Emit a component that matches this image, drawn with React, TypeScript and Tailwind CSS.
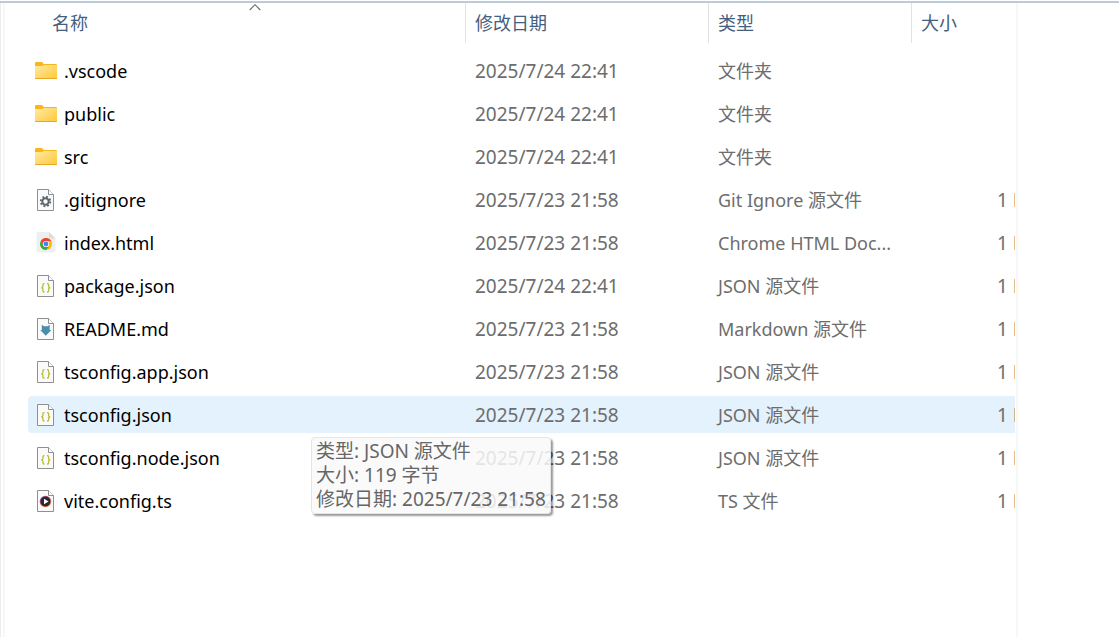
import React from "react";

type Kind = "folder" | "gear" | "chrome" | "json" | "markdown" | "media";

interface Entry {
  name: string;
  modified: string;
  type: string;
  kind: Kind;
  size?: string;
  hovered?: boolean;
}

const entries: Entry[] = [
  { name: ".vscode", modified: "2025/7/24 22:41", type: "文件夹", kind: "folder" },
  { name: "public", modified: "2025/7/24 22:41", type: "文件夹", kind: "folder" },
  { name: "src", modified: "2025/7/24 22:41", type: "文件夹", kind: "folder" },
  { name: ".gitignore", modified: "2025/7/23 21:58", type: "Git Ignore 源文件", kind: "gear", size: "1 KB" },
  { name: "index.html", modified: "2025/7/23 21:58", type: "Chrome HTML Doc...", kind: "chrome", size: "1 KB" },
  { name: "package.json", modified: "2025/7/24 22:41", type: "JSON 源文件", kind: "json", size: "1 KB" },
  { name: "README.md", modified: "2025/7/23 21:58", type: "Markdown 源文件", kind: "markdown", size: "1 KB" },
  { name: "tsconfig.app.json", modified: "2025/7/23 21:58", type: "JSON 源文件", kind: "json", size: "1 KB" },
  { name: "tsconfig.json", modified: "2025/7/23 21:58", type: "JSON 源文件", kind: "json", size: "1 KB", hovered: true },
  { name: "tsconfig.node.json", modified: "2025/7/23 21:58", type: "JSON 源文件", kind: "json", size: "1 KB" },
  { name: "vite.config.ts", modified: "2025/7/23 21:58", type: "TS 文件", kind: "media", size: "1 KB" },
];

function FolderIcon() {
  return (
    <svg width="22" height="22" viewBox="0 0 22 22" aria-hidden="true">
      <defs>
        <linearGradient id="folder-face" x1="0" y1="0" x2="1" y2="1">
          <stop offset="0" stopColor="#ffe9a2" />
          <stop offset="1" stopColor="#ffc937" />
        </linearGradient>
      </defs>
      <path d="M0 3.2Q0 2 1.2 2H6.6Q7.3 2 7.8 2.8L8.6 4H21Q22 4 22 5V8H0Z" fill="#f9b61a" />
      <path d="M0 6H7L8.6 5H22V18.2Q22 19 21.2 19H.8Q0 19 0 18.2Z" fill="url(#folder-face)" />
      <path d="M0 18H22V18.2Q22 19 21.2 19H.8Q0 19 0 18.2Z" fill="#e8a827" />
    </svg>
  );
}

function Page() {
  return (
    <>
      <path d="M3.5.5H14.5L19.5 5.5V21.5H3.5Z" fill="#fafafa" stroke="#8f8f8f" />
      <path d="M14.5.5V5.5H19.5" fill="#fff" stroke="#8f8f8f" />
    </>
  );
}

function Glyph({ kind }: { kind: Kind }) {
  if (kind === "gear") {
    return (
      <g fill="none" stroke="#59666f">
        <circle cx="11.5" cy="12.5" r="3.2" strokeWidth="2" />
        <circle cx="11.5" cy="12.5" r="4.8" strokeWidth="1.8" strokeDasharray="1.9 1.87" />
      </g>
    );
  }
  if (kind === "json") {
    return (
      <path
        d="M10.5 8.6H10Q8.9 8.6 8.9 9.7V11.6Q8.9 12.8 7.2 12.8Q8.9 12.8 8.9 14V15.9Q8.9 17 10 17H10.5M13 8.6H13.5Q14.6 8.6 14.6 9.7V11.6Q14.6 12.8 16.3 12.8Q14.6 12.8 14.6 14V15.9Q14.6 17 13.5 17H13"
        fill="none"
        stroke="#b9bd35"
        strokeWidth="1.3"
      />
    );
  }
  if (kind === "markdown") {
    return <path d="M7.8 6.8L10 8.2H13.6L15.7 6.8V12H17.4L11.8 17.8L6.2 12H7.8Z" fill="#4b8caa" />;
  }
  return (
    <>
      <defs>
        <linearGradient id="media-ring" x1="0" y1="0" x2="1" y2="1">
          <stop offset="0" stopColor="#6c4fd0" />
          <stop offset="0.5" stopColor="#d4453d" />
          <stop offset="1" stopColor="#f7a23a" />
        </linearGradient>
      </defs>
      <circle cx="11.5" cy="11.5" r="5.8" fill="url(#media-ring)" />
      <circle cx="11.5" cy="11.5" r="4.8" fill="#262a33" />
      <path d="M10 8.7L14.6 11.5L10 14.3Z" fill="#fff" />
    </>
  );
}

function FileIcon({ kind }: { kind: Kind }) {
  if (kind === "folder") return <FolderIcon />;
  if (kind === "chrome") {
    return (
      <svg width="22" height="22" viewBox="0 0 22 22" aria-hidden="true">
        <path d="M3.5 0H14L20.5 6.5V18.5Q20.5 20.5 18.5 20.5H3.5Q1.5 20.5 1.5 18.5V2Q1.5 0 3.5 0Z" fill="#eeeff0" />
        <path d="M14 0V4.5Q14 6.5 16 6.5H20.5Z" fill="#d9dbdd" />
        <circle cx="11" cy="12" r="6" fill="#fbbc05" />
        <path d="M5.8 9A6 6 0 0 1 16.2 9H11L8.5 13.5Z" fill="#ea4335" />
        <path d="M5.8 9L8.4 13.5L11 15H13.6L11 18A6 6 0 0 1 5.8 9Z" fill="#34a853" />
        <circle cx="11" cy="12" r="3.1" fill="#fff" />
        <circle cx="11" cy="12" r="2.4" fill="#4285f4" />
      </svg>
    );
  }
  return (
    <svg width="22" height="22" viewBox="1 0 22 22" aria-hidden="true">
      <Page />
      <Glyph kind={kind} />
    </svg>
  );
}

function HeaderCell({ label, className, sorted }: { label: string; className: string; sorted?: boolean }) {
  return (
    <th scope="col" aria-sort={sorted ? "ascending" : undefined} className="p-0 pb-1.5 text-left font-normal">
      <button type="button" className={`relative block h-10 w-full text-left text-lg leading-10 text-[#44607e] ${className}`}>
        {label}
        {sorted && (
          <span className="absolute inset-x-0 top-0 flex justify-center pl-4">
            <svg width="12" height="8" viewBox="0 0 12 8" aria-hidden="true">
              <path d="M.7 7L6 1.7L11.3 7" fill="none" stroke="#6b6b6b" strokeWidth="1.1" />
            </svg>
          </span>
        )}
      </button>
    </th>
  );
}

function Row({ entry }: { entry: Entry }) {
  const fill = entry.hovered ? "bg-[#e4f2fd]" : "";
  return (
    <tr className="text-[19px] text-[#6d6d6d]">
      <td className="p-0 py-[3px]">
        <button type="button" className={`flex h-[37px] w-full items-center gap-[7px] rounded-l-sm pl-[7px] text-left text-lg text-black ${fill}`}>
          <FileIcon kind={entry.kind} />
          <span className="pt-0.5 leading-[35px]">{entry.name}</span>
        </button>
      </td>
      <td className="p-0 py-[3px]">
        <div className={`h-[37px] pl-2.5 leading-[38px] whitespace-nowrap ${fill}`}>{entry.modified}</div>
      </td>
      <td className="p-0 py-[3px]">
        <div className={`h-[37px] pl-2.5 text-lg leading-[38px] whitespace-nowrap ${fill}`}>{entry.type}</div>
      </td>
      <td className="p-0 py-[3px]">
        <div className={`h-[37px] overflow-hidden pl-[86px] leading-[38px] whitespace-nowrap ${fill}`}>{entry.size}</div>
      </td>
    </tr>
  );
}

export default function App() {
  return (
    <div className="relative flex min-h-screen flex-col bg-white font-['Noto_Sans','Noto_Sans_CJK_SC',sans-serif]">
      <div className="mt-px h-0.5 bg-[#bccbd9]" />
      <div className="flex grow">
        <div className="w-[5px] shrink-0 border-r-2 border-l border-r-[#f7f7f7] border-l-[#ececec]" />
        <main className="min-w-0 grow pr-px pl-[23px]">
          <table className="w-full table-fixed border-collapse">
            <colgroup>
              <col />
              <col className="w-[243px]" />
              <col className="w-[203px]" />
              <col className="w-[104px]" />
            </colgroup>
            <thead>
              <tr>
                <HeaderCell label="名称" className="pl-6" sorted />
                <HeaderCell label="修改日期" className="border-l border-[#e2e2e2] pl-[9px]" />
                <HeaderCell label="类型" className="border-l border-[#e2e2e2] pl-[9px]" />
                <HeaderCell label="大小" className="border-l border-[#e2e2e2] pl-[9px]" />
              </tr>
            </thead>
            <tbody>
              {entries.map((entry) => (
                <Row key={entry.name} entry={entry} />
              ))}
            </tbody>
          </table>
        </main>
        <aside className="w-[103px] shrink-0 border-l-2 border-[#f7f7f7]" />
      </div>
      <div
        role="tooltip"
        className="absolute top-[437px] left-[311px] rounded border border-[#e3e5e8] bg-[#f9f9f9]/85 px-1 pt-px pb-0.5 text-[19px] leading-6 whitespace-nowrap text-[#666] shadow-[2px_2px_2px_rgba(0,0,0,0.4)]"
      >
        <div>类型: JSON 源文件</div>
        <div>大小: 119 字节</div>
        <div>修改日期: 2025/7/23 21:58</div>
      </div>
    </div>
  );
}
